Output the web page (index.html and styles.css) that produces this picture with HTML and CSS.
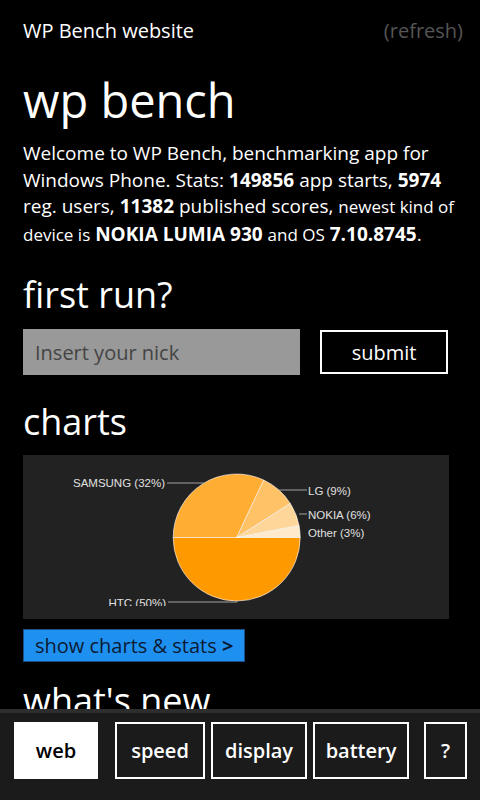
FILE: index.html
```html
<!DOCTYPE html>
<html lang="en">

<head>
    <meta charset="UTF-8">
    <title>WP Bench website</title>
    <link rel="stylesheet" href="styles.css">
</head>

<body>
    <div class="page">
        <div class="top-bar">
            <span class="site-name">WP Bench website</span>
            <span class="refresh">(refresh)</span>
        </div>

        <h1 class="title">wp bench</h1>
        <p class="intro">
            Welcome to WP Bench, benchmarking app for Windows Phone. Stats: <b>149856</b> app starts, <b>5974</b>
            reg. users, <b>11382</b> published scores, <span class="small">newest kind of device is</span>
            <b>NOKIA LUMIA 930</b> <span class="small">and OS</span> <b>7.10.8745</b>.
        </p>

        <h2 class="section-title">first run?</h2>
        <form class="nick-form">
            <input type="text" class="nick-input" placeholder="Insert your nick">
            <button type="submit" class="submit-btn">submit</button>
        </form>

        <h2 class="section-title">charts</h2>
        <div class="chart">
            <svg width="426" height="164" viewBox="0 0 426 164">
                <defs>
                    <clipPath id="chart-area">
                        <rect x="0" y="0" width="426" height="151"></rect>
                    </clipPath>
                </defs>
                <g clip-path="url(#chart-area)">
                    <g stroke="#ffffff" stroke-width="0.6">
                        <path d="M213.7,82.5 L277.2,82.5 A63.5,63.5 0 0 1 150.2,82.5 Z" fill="#ff9900"></path>
                        <path d="M213.7,82.5 L150.2,82.5 A63.5,63.5 0 0 1 240.74,25.05 Z" fill="#ffad33"></path>
                        <path d="M213.7,82.5 L240.74,25.05 A63.5,63.5 0 0 1 267.31,48.48 Z" fill="#ffc266"></path>
                        <path d="M213.7,82.5 L267.31,48.48 A63.5,63.5 0 0 1 276.08,70.6 Z" fill="#ffd699"></path>
                        <path d="M213.7,82.5 L276.08,70.6 A63.5,63.5 0 0 1 277.2,82.5 Z" fill="#ffebcc"></path>
                    </g>
                    <g stroke="#a0a0a0" stroke-width="1" fill="none">
                        <path d="M144,28 L181,28"></path>
                        <path d="M256,35 L284,35"></path>
                        <path d="M276,59 L284,59"></path>
                        <path d="M145,147 L214,147 L214,146"></path>
                    </g>
                    <g class="chart-label">
                        <text x="142" y="32" text-anchor="end">SAMSUNG (32%)</text>
                        <text x="285" y="39.5">LG (9%)</text>
                        <text x="285" y="63.5">NOKIA (6%)</text>
                        <text x="285" y="81.5">Other (3%)</text>
                        <text x="143" y="151.5" text-anchor="end">HTC (50%)</text>
                    </g>
                </g>
            </svg>
        </div>

        <a class="stats-link" href="#">show charts &amp; stats <b>&gt;</b></a>

        <h2 class="section-title news">what's new</h2>
    </div>

    <div class="app-bar">
        <button class="tab active tab-web">web</button>
        <button class="tab tab-speed">speed</button>
        <button class="tab tab-display">display</button>
        <button class="tab tab-battery">battery</button>
        <button class="tab tab-help">?</button>
    </div>
</body>

</html>
```

FILE: styles.css
```css
body {
    margin: 0;
    height: 800px;
    overflow: hidden;
    background-color: #000;
    color: #fff;
    font-family: "Open Sans", "Noto Sans", sans-serif;
}

.page {
    padding: 17px 17px 0 23px;
}

.top-bar {
    display: flex;
    justify-content: space-between;
    font-size: 20px;
    line-height: 28px;
}

.refresh {
    color: #555;
}

.title {
    margin: 26px 0 0;
    font-size: 47px;
    font-weight: normal;
    line-height: 58px;
}

.intro {
    margin: 11px 0 0;
    font-size: 19px;
    line-height: 26.5px;
}

.intro .small {
    font-size: 17px;
}

.section-title {
    margin: 25px 0 0;
    font-size: 36px;
    font-weight: normal;
    line-height: 44px;
}

.nick-form {
    display: flex;
    align-items: center;
    margin-top: 12px;
}

.nick-input {
    width: 277px;
    height: 46px;
    box-sizing: border-box;
    padding: 0 12px;
    border: none;
    background-color: #999;
    font-family: inherit;
    font-size: 20px;
    color: #222;
}

.nick-input::placeholder {
    color: #444;
}

.submit-btn {
    width: 128px;
    height: 44px;
    margin-left: 20px;
    border: 2px solid #fff;
    background-color: #000;
    color: #fff;
    font-family: inherit;
    font-size: 20px;
    cursor: pointer;
}

.chart {
    width: 426px;
    height: 164px;
    margin-top: 11px;
    background-color: #222;
}

.chart svg {
    display: block;
}

.chart-label {
    font-family: "Liberation Sans", Arial, sans-serif;
    font-size: 11.5px;
    fill: #e0e0e0;
}

.stats-link {
    display: inline-block;
    margin-top: 10px;
    padding: 0 11px;
    height: 33px;
    line-height: 31px;
    box-sizing: border-box;
    border: 1px solid #1a4f8a;
    background-color: #1e90f0;
    color: #0b1a33;
    font-size: 20px;
    text-decoration: none;
}

.section-title.news {
    margin-top: 17px;
}

.app-bar {
    position: fixed;
    left: 0;
    right: 0;
    bottom: 0;
    height: 78px;
    display: flex;
    align-items: flex-start;
    padding: 9px 0 0 14px;
    border-top: 4px solid #2e2e2e;
    background-color: #1b1b1b;
}

.tab {
    height: 57px;
    border: 2px solid #fff;
    background-color: #1b1b1b;
    color: #fff;
    font-family: inherit;
    font-size: 20px;
    font-weight: 600;
    padding: 0;
    cursor: pointer;
}

.tab.active {
    background-color: #fff;
    color: #000;
}

.tab-web {
    width: 84px;
}

.tab-speed {
    width: 90px;
    margin-left: 17px;
}

.tab-display {
    width: 96px;
    margin-left: 6px;
}

.tab-battery {
    width: 96px;
    margin-left: 6px;
}

.tab-help {
    width: 43px;
    margin-left: 15px;
}
```
